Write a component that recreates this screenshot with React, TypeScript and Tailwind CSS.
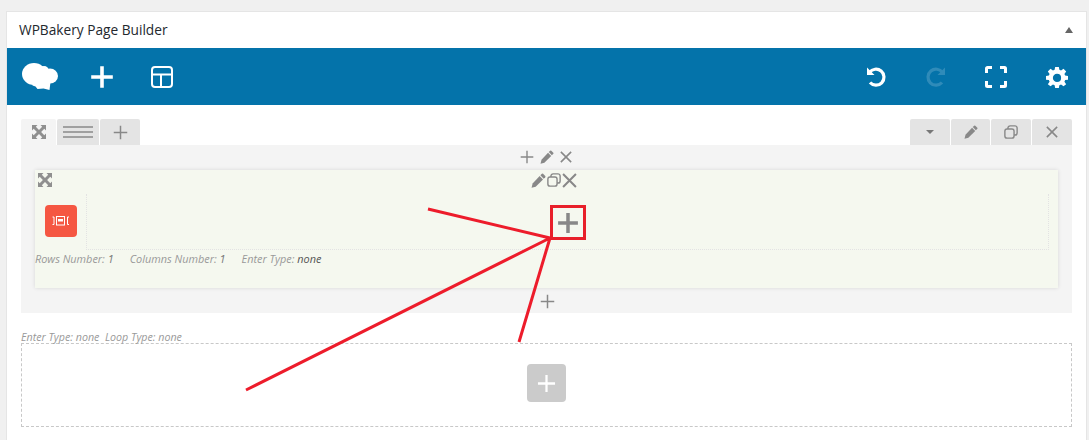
import React from "react";

const font = { fontFamily: '"Open Sans", "Noto Sans", sans-serif' };

function Plus({ size = 20, color = "#888", w = 2 }: { size?: number; color?: string; w?: number }) {
  return (
    <svg width={size} height={size} viewBox="0 0 20 20" fill="none" stroke={color} strokeWidth={w}>
      <path d="M10 1v18M1 10h18" />
    </svg>
  );
}
function Pencil({ size = 16, color = "#888" }: { size?: number; color?: string }) {
  return (
    <svg width={size} height={size} viewBox="0 0 16 16" fill={color}>
      <path d="M11.600.8a1 1 0 0 1 1.300 0l2.300 2.300a1 1 0 0 1 0 1.300L13.600 6 10 2.400z" />
      <path d="M9.200 3.200 12.800 6.800 5 14.600.6 15.800 1.700 11.200z" />
    </svg>
  );
}
function Copy({ size = 16, color = "#888", w = 1.6 }: { size?: number; color?: string; w?: number }) {
  return (
    <svg width={size} height={size} viewBox="0 0 16 16" fill="none" stroke={color} strokeWidth={w}>
      <rect x="1" y="4.500" width="10.500" height="10.500" rx="2.500" />
      <path d="M4.500 4.500V3.500A2.500 2.500 0 0 1 7 1h5.500A2.500 2.500 0 0 1 15 3.500V9a2.500 2.500 0 0 1-2.500 2.500h-1" />
    </svg>
  );
}
function Cross({ size = 14, color = "#888", w = 2 }: { size?: number; color?: string; w?: number }) {
  return (
    <svg width={size} height={size} viewBox="0 0 14 14" fill="none" stroke={color} strokeWidth={w}>
      <path d="M1 1l12 12M13 1 1 13" />
    </svg>
  );
}
function Expand({ size = 14 }: { size?: number }) {
  return (
    <svg width={size} height={size} viewBox="0 0 14 14" fill="#8f8f8f">
      <path d="M0 0h5.500L3.800 1.700 7 4.900l3.200-3.200L8.500 0H14v5.500l-1.700-1.700L9.100 7l3.200 3.200L14 8.500V14H8.500l1.700-1.700L7 9.100l-3.200 3.200L5.500 14H0V8.500l1.700 1.700L4.900 7 1.700 3.800 0 5.500z" />
    </svg>
  );
}

function Tab({ w, active, children }: { w: string; active?: boolean; children: React.ReactNode }) {
  return (
    <div className={`${w} ${active ? "bg-[#f4f4f4]" : "bg-[#e4e4e4]"} h-[26px] rounded-t-[2px] flex items-center justify-center`}>
      {children}
    </div>
  );
}

export default function App() {
  return (
    <div className="relative w-[1089px] h-[440px] overflow-hidden bg-[#f0f0f0] pt-[11px] pl-[6px] pr-[2px]" style={font}>
      <div className="h-[429px] bg-white border border-[#e5e5e5] border-b-0">
        <div className="h-[36px] flex items-center justify-between pl-[12px] pr-[12px]">
          <span className="text-[13.700px] font-medium text-[#23282d]">WPBakery Page Builder</span>
          <span className="w-0 h-0 border-x-[4px] border-x-transparent border-b-[6px] border-b-[#666] mr-[1px]" />
        </div>

        <div className="h-[57px] bg-[#0473aa] flex items-center justify-between pl-[15px] pr-[18px]">
          <div className="flex items-center">
            <svg width="36" height="28" viewBox="0 0 36 28" fill="#fff">
              <ellipse cx="12" cy="11" rx="12" ry="11" />
              <ellipse cx="28" cy="13" rx="8" ry="7.500" />
              <circle cx="22" cy="8" r="5" />
              <path d="M10 15 29 15l-1.500 12-6-1.500-6 .5-2-2.500-3-1z" />
            </svg>
            <span className="ml-[32px] flex"><Plus size={24} color="#fff" w={3} /></span>
            <svg className="ml-[36px]" width="24" height="24" viewBox="0 0 24 24" fill="none" stroke="#fff" strokeWidth="2">
              <rect x="2" y="2" width="20" height="20" rx="3" />
              <path d="M2 9.500h20M11 9.500V22" />
            </svg>
          </div>
          <div className="flex items-center">
            <svg width="22" height="22" viewBox="0 0 22 22" fill="none" stroke="#fff" strokeWidth="3.200">
              <path d="M4.500 6.500A8 8 0 1 1 5 16.500" />
              <path d="M2 1.500V9h7.500z" fill="#fff" stroke="none" />
            </svg>
            <svg className="ml-[38px]" width="22" height="22" viewBox="0 0 22 22" fill="none" stroke="#2f8bb9" strokeWidth="3.200">
              <path d="M17.500 6.500A8 8 0 1 0 17 16.500" />
              <path d="M20 1.500V9h-7.500z" fill="#2f8bb9" stroke="none" />
            </svg>
            <svg className="ml-[38px]" width="22" height="22" viewBox="0 0 22 22" fill="none" stroke="#fff" strokeWidth="3">
              <path d="M1.500 7V2.500a1 1 0 0 1 1-1H7M15 1.500h4.500a1 1 0 0 1 1 1V7M20.500 15v4.500a1 1 0 0 1-1 1H15M7 20.500H2.500a1 1 0 0 1-1-1V15" />
            </svg>
            <svg className="ml-[39px]" width="22" height="22" viewBox="0 0 24 24" fill="#fff">
              <path fillRule="evenodd" d="M10 1h4l.600 3.100 1.800.800L19.100 3 22 5.900l-1.900 2.700.800 1.800L24 11v4l-3.100.400-.800 1.900 1.900 2.700-2.900 2-2.700-1.800-1.800.800L14 24h-4l-.600-3-1.800-.800L4.900 22 2 20l1.900-2.700-.800-1.900L0 15v-4l3.100-.600.800-1.800L2 5.900 4.900 3l2.700 1.900 1.800-.800zM12 8.500a4.500 4.500 0 1 0 0 9 4.500 4.500 0 0 0 0-9z" />
            </svg>
          </div>
        </div>

        <div className="pt-[14px] pl-[14px] pr-[14px]">
          <div className="flex justify-between">
            <div className="flex gap-[1px]">
              <Tab w="w-[35px]" active><Expand /></Tab>
              <Tab w="w-[42px]">
                <div className="flex flex-col gap-[3px] w-[30px]">
                  <div className="h-[2px] bg-[#a0a0a0]" />
                  <div className="h-[2px] bg-[#a0a0a0]" />
                  <div className="h-[2px] bg-[#a0a0a0]" />
                </div>
              </Tab>
              <Tab w="w-[40px]"><Plus size={15} /></Tab>
            </div>
            <div className="flex gap-[1px]">
              <Tab w="w-[40px]">
                <span className="w-0 h-0 border-x-[4px] border-x-transparent border-t-[4px] border-t-[#777]" />
              </Tab>
              <Tab w="w-[39px]"><Pencil size={14} /></Tab>
              <Tab w="w-[40px]"><Copy size={14} /></Tab>
              <Tab w="w-[40px]"><Cross size={12} w={1.800} /></Tab>
            </div>
          </div>

          <div className="h-[168px] bg-[#f4f4f4] pl-[14px] pr-[14px] flex flex-col">
            <div className="h-[24px] flex items-center justify-center gap-[6px] shrink-0 pr-[2px]">
              <Plus size={14} />
              <Pencil size={14} />
              <Cross size={12} w={1.800} />
            </div>
            <div className="mt-[1px] h-[118px] shrink-0 bg-[#f5f8ef] shadow-[0_0_4px_rgba(0,0,0,0.12)] relative">
              <div className="absolute left-[3px] top-[3px]"><Expand /></div>
              <div className="h-[20px] flex items-center justify-center gap-[1px] pl-[15px]">
                <Pencil size={15} />
                <Copy size={14} />
                <Cross size={15} w={1.900} />
              </div>
              <div className="flex h-[60px] pt-[4px]">
                <div className="w-[51px] shrink-0 flex items-center justify-center">
                  <div className="mt-[-2px] w-[32px] h-[32px] rounded-[4px] bg-[#f55742] flex items-center justify-center">
                    <svg width="18" height="10" viewBox="0 0 18 10" fill="none" stroke="#fff">
                      <path d="M0.500 1H2V8.500H0.500M17 1h-1.500V8.500H17" />
                      <rect x="4.500" y="0.500" width="8" height="8.500" />
                      <rect x="6" y="3" width="5" height="2.500" fill="#fff" stroke="none" />
                    </svg>
                  </div>
                </div>
                <div className="flex-1 mr-[9px] border-l border-b border-r border-dotted border-[#e3e3e3] flex items-center justify-center">
                  <div className="ml-[1px] mt-[3px] w-[35px] h-[35px] flex items-center justify-center">
                    <Plus size={22} w={3.200} />
                  </div>
                </div>
              </div>
              <div className="pt-[1px] flex text-[10.900px] italic text-[#999] leading-[15px]">
                <span>Rows Number: <span className="text-[#777]">1</span></span>
                <span className="ml-[16px]">Columns Number: <span className="text-[#777]">1</span></span>
                <span className="ml-[16px]">Enter Type: <span className="text-[#555]">none</span></span>
              </div>
            </div>
            <div className="flex-1 flex items-center justify-center pl-[1px] pt-[2px]">
              <Plus size={15} />
            </div>
          </div>

          <div className="mt-[17px] text-[10.700px] italic text-[#999] leading-[14px] h-[13px]">Enter Type: none&nbsp; Loop Type: none</div>
          <div className="h-[84px] border border-dashed border-[#c8c8c8] flex items-center justify-center">
            <div className="mb-[4px] w-[39px] h-[38px] rounded-[4px] bg-[#cbcbcb] flex items-center justify-center">
              <Plus size={19} color="#fff" w={2.400} />
            </div>
          </div>
        </div>
      </div>

      <div className="absolute left-[550px] top-[205px] w-[36px] h-[35px] border-[3px] border-[#e8202a]" />
      <svg className="absolute left-0 top-0 pointer-events-none" width="1089" height="440" fill="none" stroke="#ed1c2b" strokeWidth="3">
        <path d="M428 209 550 238M246 390 550 238M519 342 550 238" />
      </svg>
    </div>
  );
}
